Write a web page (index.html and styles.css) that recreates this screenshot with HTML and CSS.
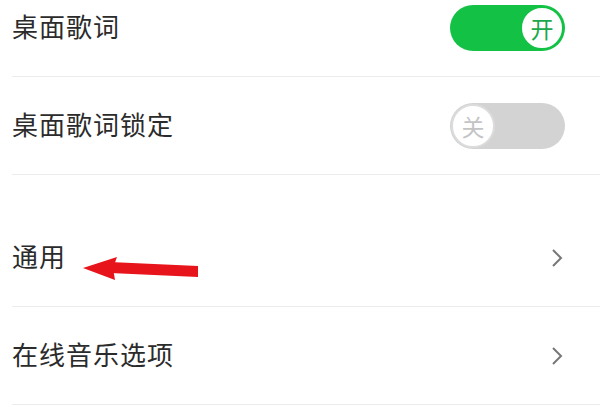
FILE: index.html
```html
<!DOCTYPE html>
<html>
<head>
<meta charset="utf-8">
<title>设置</title>
<link rel="stylesheet" href="styles.css">
</head>
<body>
<div class="settings">
  <div class="group">
    <div class="row">
      <span class="label">桌面歌词</span>
      <div class="switch on"><span class="knob">开</span></div>
    </div>
    <div class="row">
      <span class="label">桌面歌词锁定</span>
      <div class="switch off"><span class="knob">关</span></div>
    </div>
  </div>
  <div class="group">
    <div class="row">
      <span class="label">通用</span>
      <svg class="chevron" viewBox="0 0 12 20" width="12" height="20"><path d="M2 2 L10 10 L2 18" /></svg>
    </div>
    <div class="row">
      <span class="label">在线音乐选项</span>
      <svg class="chevron" viewBox="0 0 12 20" width="12" height="20"><path d="M2 2 L10 10 L2 18" /></svg>
    </div>
  </div>
</div>
<!-- red annotation arrow -->
<svg class="arrow" viewBox="0 0 125 40" width="125" height="40">
  <polygon points="30,17 118,21 118,32 30,28" />
  <polygon points="3,23 37,12 33,23 35,35" />
</svg>
</body>
</html>
```

FILE: styles.css
```css
html, body{
    margin: 0;
    background: #fff;
}
body{
    position: relative;
    width: 600px;
    height: 407px;
    overflow: hidden;
    font-family: "Noto Sans CJK SC", "Noto Sans", sans-serif;
}
.settings{
    margin-top: -21px;
}
.group + .group{
    margin-top: 34px;
}
.row{
    display: flex;
    align-items: center;
    justify-content: space-between;
    height: 97px;
    margin-left: 12px;
    padding-right: 35px;
    border-bottom: 1px solid #ececec;
}
.label{
    margin-top: -4px;
    font-size: 26px;
    letter-spacing: 1px;
    color: #2b2b2b;
}
.switch{
    display: flex;
    align-items: center;
    box-sizing: border-box;
    width: 115px;
    height: 46px;
    padding: 1px;
    border-radius: 23px;
}
.switch.on{
    background: #13c244;
    justify-content: flex-end;
}
.switch.off{
    background: #d3d3d3;
    justify-content: flex-start;
}
.knob{
    display: flex;
    align-items: center;
    justify-content: center;
    box-sizing: border-box;
    width: 44px;
    height: 44px;
    border-radius: 50%;
    background: #fff;
    font-size: 23px;
}
.switch.on .knob{
    border: 2px solid #13c244;
    color: #1aa84a;
}
.switch.off .knob{
    border: 2px solid #dcdcdc;
    color: #c4c4c4;
}
.chevron{
    margin-right: 2px;
}
.chevron path{
    fill: none;
    stroke: #777;
    stroke-width: 2;
}
.arrow{
    position: absolute;
    left: 80px;
    top: 245px;
}
.arrow polygon{
    fill: #e8141b;
}
```
